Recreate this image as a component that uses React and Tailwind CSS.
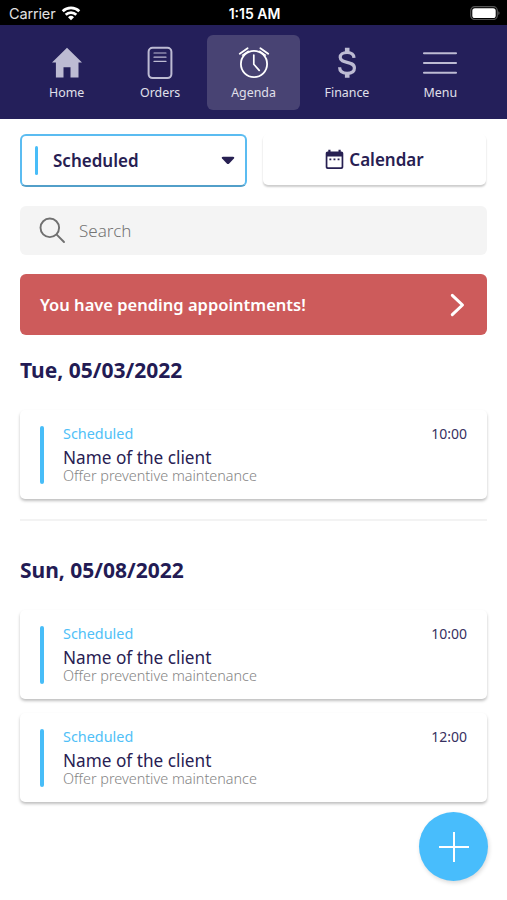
import React from "react";

function StatusBar() {
  return (
    <div className="flex h-[25px] items-center bg-black font-['Inter','Liberation_Sans',sans-serif] text-white">
      <div className="flex flex-1 items-center gap-[6px] pl-[9px]">
        <span className="mt-[3px] text-[14.5px] leading-[20px] tracking-[-0.15px] text-[#e2e2e2]">Carrier</span>
        <svg width="20" height="15" viewBox="0 0 20 15" className="mt-[1px]" fill="none" stroke="#fff" strokeWidth="2.7">
          <path d="M1.7 5.3a12 12 0 0 1 16.6 0" />
          <path d="M4.7 8.7a7.6 7.6 0 0 1 10.6 0" />
          <path d="M10 14.2 7 11.2a4.3 4.3 0 0 1 6 0Z" fill="#fff" stroke="none" />
        </svg>
      </div>
      <span className="mt-[3px] text-[14px] font-semibold leading-[20px] tracking-[0px]">1:15 AM</span>
      <div className="flex flex-1 justify-end pr-[7px]">
        <svg width="30" height="14" viewBox="0 0 30 14" className="mt-[1px]">
          <rect x="0.7" y="0.7" width="26.6" height="12.8" rx="4" fill="none" stroke="#565656" strokeWidth="1.2" />
          <rect x="2.3" y="2.2" width="23.4" height="9.8" rx="2.6" fill="#fff" />
          <path d="M28.4 5.2c1.5.6 1.5 3.1 0 3.8Z" fill="#666" />
        </svg>
      </div>
    </div>
  );
}

const icons = {
  home: (
    <svg width="32" height="32" viewBox="0 0 32 32" fill="#bdbbd3">
      <path d="M16 .8 31 15.6h-3.5V30.4h-8V20.3h-7v10.1H4.9V15.6H1Z" />
    </svg>
  ),
  orders: (
    <svg width="26" height="34" viewBox="0 0 26 34" fill="none" stroke="#bdbbd3" strokeLinecap="round">
      <rect x="1.6" y="1.7" width="22.8" height="30.4" rx="4" strokeWidth="2" />
      <path d="M7 7h12M7 11.2h12M7 15.4h12" strokeWidth="1.2" />
    </svg>
  ),
  agenda: (
    <svg width="32" height="32" viewBox="0 0 32 32" fill="none" stroke="#fff" strokeLinecap="round">
      <circle cx="16" cy="17" r="13.1" strokeWidth="1.8" />
      <path d="M15.8 8v9.2l5.4 6.2" strokeWidth="1.7" />
      <path d="M1.8 6.7 9.6 1.2M22.4 1.2l7.8 5.5" strokeWidth="1.8" />
      <path d="M4.3 8.3 10.4 4M21.6 4l6.1 4.3" strokeWidth="1.1" />
    </svg>
  ),
  finance: (
    <svg width="20" height="32" viewBox="0 0 20 32" fill="none" stroke="#bdbbd3">
      <path d="M17 10.8C16.8 7.2 14 5.5 10.1 5.5 6 5.5 3.2 7.3 3.2 10.3c0 7 14.2 3 14.2 10.6 0 3.6-3.1 5.4-7.3 5.4-4.3 0-7.4-2-7.5-6" strokeWidth="3.2" />
      <path d="M10.2.7v5M10.2 26v4.7" strokeWidth="4.6" />
    </svg>
  ),
  menu: (
    <svg width="36" height="26" viewBox="0 0 36 26" fill="none" stroke="#bdbbd3" strokeWidth="2.1" strokeLinecap="round">
      <path d="M2 3.3h32M2 13h32M2 22.8h32" />
    </svg>
  ),
};

function NavItem({ icon, label, active, text }) {
  return (
    <div className={"flex h-[75px] flex-1 flex-col items-center rounded-[6px] " + (active ? "bg-[#484373]" : "")}>
      <div className="mt-[11px] flex h-[34px] items-center">{icons[icon]}</div>
      <span className={"mt-[4px] text-[12.4px] leading-[18px] text-[#e1e0eb] " + text}>{label}</span>
    </div>
  );
}

function AppointmentCard({ time }) {
  return (
    <div className="flex h-[89px] rounded-[5px] bg-white px-[20px] shadow-[0_2px_3px_rgba(0,0,0,0.25)]">
      <div className="mt-[16px] h-[58px] w-[4px] rounded-full bg-[#48bdf8]" />
      <div className="ml-[19px] flex flex-1 flex-col whitespace-nowrap">
        <span className="mt-[14px] h-[20px] text-[14.4px] leading-[20px] text-[#50bff7]">Scheduled</span>
        <span className="mt-[3px] h-[22px] text-[17.2px] leading-[22px] text-[#272052]">Name of the client</span>
        <span className="mt-[-2px] h-[18px] text-[14.4px] font-light leading-[18px] text-[#858585]">Offer preventive maintenance</span>
      </div>
      <span className="mt-[14px] h-[20px] text-[14px] leading-[20px] text-[#373061]">{time}</span>
    </div>
  );
}

export default function App() {
  return (
    <div className="relative h-[900px] w-[507px] overflow-hidden bg-white font-['Noto_Sans','Open_Sans',sans-serif]">
      <StatusBar />
      <nav className="flex h-[94px] bg-[#241f5a] px-[20px] pt-[10px]">
        <NavItem icon="home" label="Home" text="" />
        <NavItem icon="orders" label="Orders" text="" />
        <NavItem icon="agenda" label="Agenda" active text="" />
        <NavItem icon="finance" label="Finance" text="" />
        <NavItem icon="menu" label="Menu" text="" />
      </nav>

      <main className="flex flex-col px-[20px] pt-[15px]">
        <div className="flex gap-[16px]">
          <button className="flex h-[53px] w-[227px] items-center rounded-[6px] border-2 border-[#5bbcf1] border-b-[#529fc9] bg-white pl-[13px] pr-[10px]">
            <span className="h-[29px] w-[3px] rounded-full bg-[#48bdf8]" />
            <span className="ml-[15px] flex-1 text-left text-[17px] font-semibold leading-[24px] text-[#272052]">Scheduled</span>
            <svg width="14" height="9" viewBox="0 0 14 9" fill="#272052">
              <path d="M2 .8h10c1.2 0 1.6 1 .9 1.8L8.2 7.5c-.7.7-1.7.7-2.4 0L1.1 2.6C.4 1.8.8.8 2 .8Z" />
            </svg>
          </button>
          <button className="flex h-[51px] w-[223px] items-center justify-center gap-[5px] rounded-[5px] bg-white shadow-[0_2px_2px_rgba(0,0,0,0.2)]">
            <svg width="19" height="21" viewBox="0 0 19 21" fill="#272052">
              <path fillRule="evenodd" d="M3.3.8h2.2v1.7h8V.8h2.2v1.7h.6c1.2 0 2 .8 2 2v13.4c0 1.2-.8 2-2 2H2.7c-1.2 0-2-.8-2-2V4.5c0-1.2.8-2 2-2h.6ZM2.4 7.4v10.2c0 .4.2.6.6.6h13c.4 0 .6-.2.6-.6V7.4Z" />
              <path d="M4.4 9.4h1.9v1.9H4.4ZM8.5 9.4h1.9v1.9H8.5ZM12.6 9.4h1.9v1.9h-1.9Z" />
            </svg>
            <span className="text-[17px] font-semibold leading-[24px] text-[#272052]">Calendar</span>
          </button>
        </div>

        <div className="mt-[19px] flex h-[49px] items-center rounded-[6px] bg-[#f4f4f4] pl-[19px]">
          <svg width="27" height="27" viewBox="0 0 27 27" fill="none" stroke="#707070" strokeWidth="1.9" strokeLinecap="round">
            <circle cx="10.8" cy="10.8" r="9.3" />
            <path d="m17.7 17.7 7.3 7.3" />
          </svg>
          <span className="ml-[13px] text-[17px] font-light leading-[24px] text-[#747474]">Search</span>
        </div>

        <div className="mt-[19px] flex h-[61px] items-center justify-between rounded-[6px] bg-[#cd5b5b] pl-[20px] pr-[22px]">
          <span className="whitespace-nowrap text-[16.5px] font-semibold leading-[24px] text-white">You have pending appointments!</span>
          <svg width="17" height="24" viewBox="0 0 17 24" fill="none" stroke="#fff" strokeWidth="3" strokeLinecap="round" strokeLinejoin="round">
            <path d="M4.3 2.3 14.5 12 4.3 21.7" />
          </svg>
        </div>

        <h2 className="mt-[20px] h-[30px] text-[21px] font-bold leading-[30px] text-[#231b54]">Tue, 05/03/2022</h2>
        <div className="mt-[25px]">
          <AppointmentCard time="10:00" />
        </div>

        <div className="mt-[20px] h-[2px] bg-[#f3f3f3]" />

        <h2 className="mt-[34px] h-[30px] text-[21px] font-bold leading-[30px] text-[#231b54]">Sun, 05/08/2022</h2>
        <div className="mt-[25px] flex flex-col gap-[14px]">
          <AppointmentCard time="10:00" />
          <AppointmentCard time="12:00" />
        </div>
      </main>

      <button className="absolute left-[419px] top-[812px] flex size-[69px] items-center justify-center rounded-full bg-[#48bdfc] shadow-[1px_2px_4px_rgba(0,0,0,0.15)]">
        <svg width="30" height="30" viewBox="0 0 30 30" stroke="#fff" strokeWidth="2">
          <path d="M15 0v30M0 15h30" />
        </svg>
      </button>
    </div>
  );
}
